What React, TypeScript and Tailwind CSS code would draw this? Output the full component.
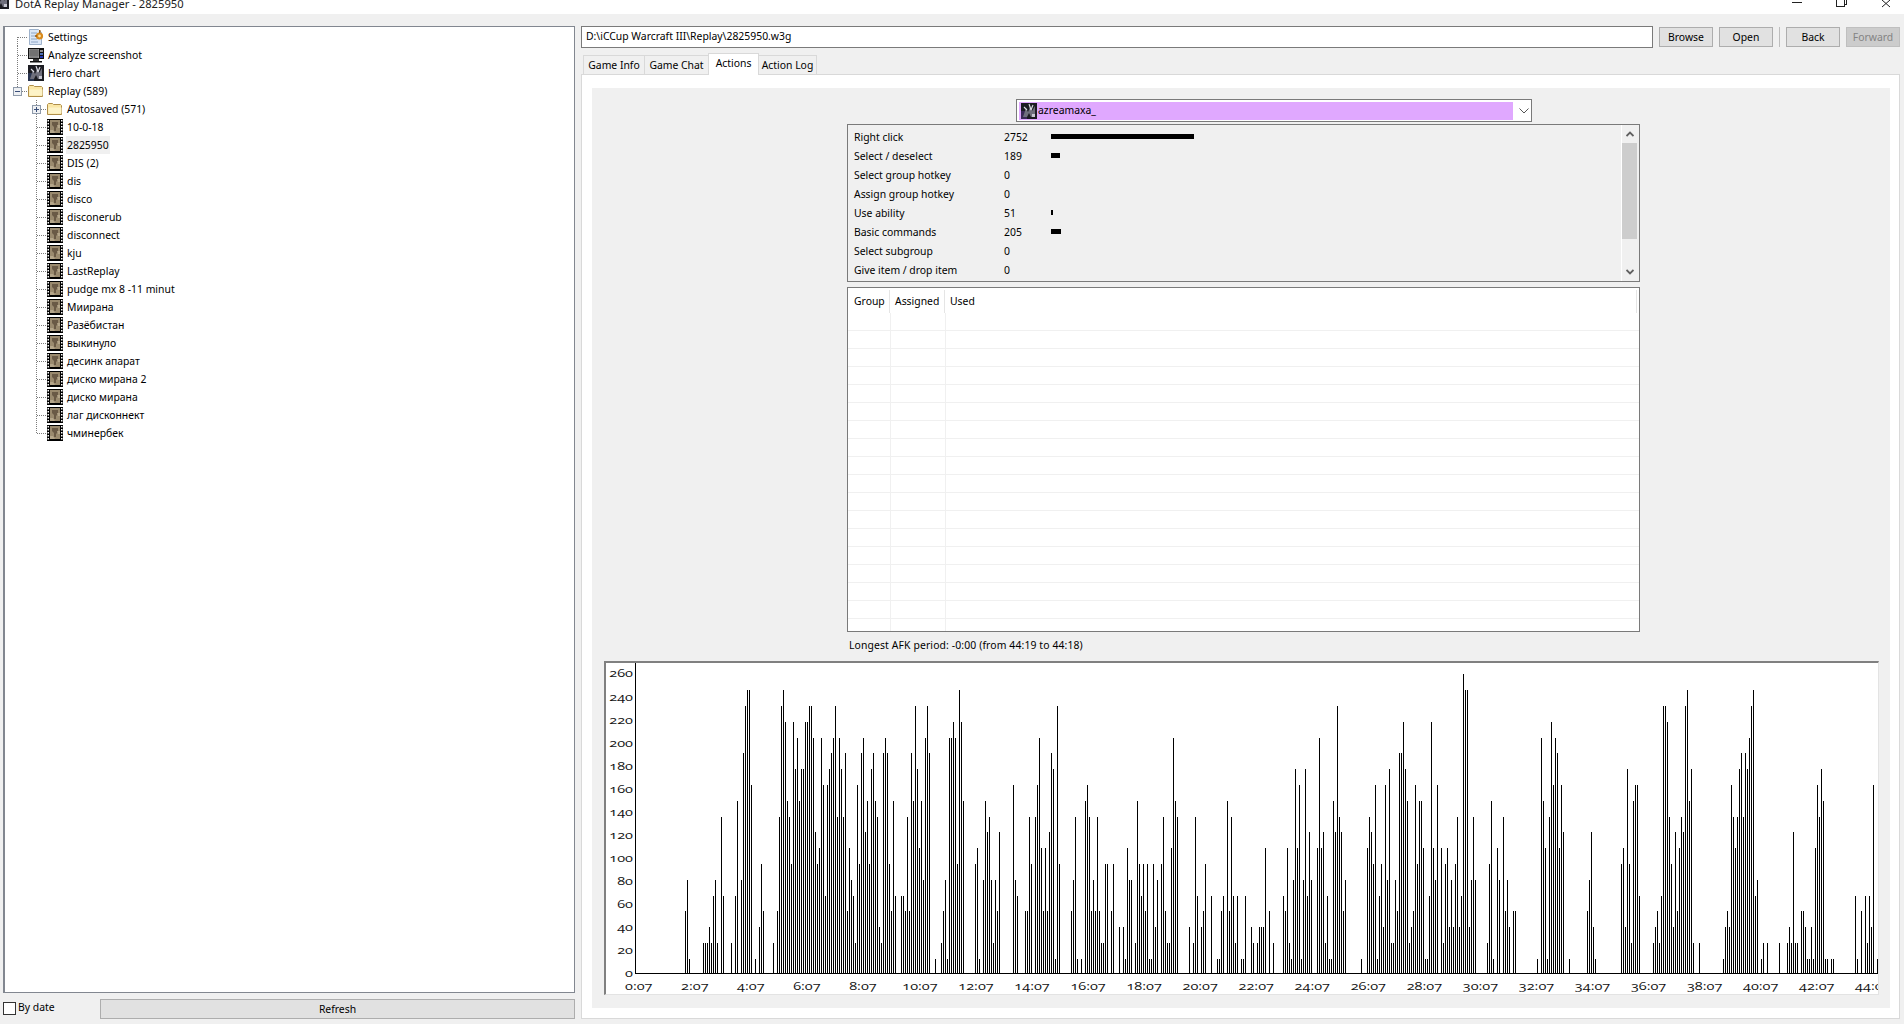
const replays = [
  "10-0-18",
  "2825950",
  "DIS (2)",
  "dis",
  "disco",
  "disconerub",
  "disconnect",
  "kju",
  "LastReplay",
  "pudge mx 8 -11 minut",
  "Миирана",
  "Разёбистан",
  "выкинуло",
  "десинк апарат",
  "диско мирана 2",
  "диско мирана",
  "лаг дисконнект",
  "чминербек",
];

const actions: [string, string, number][] = [
  ["Right click", "2752", 143],
  ["Select / deselect", "189", 9],
  ["Select group hotkey", "0", 0],
  ["Assign group hotkey", "0", 0],
  ["Use ability", "51", 2],
  ["Basic commands", "205", 10],
  ["Select subgroup", "0", 0],
  ["Give item / drop item", "0", 0],
];

// bars of the chart: [first slot, one base-36 level per slot]
const barRuns: [number, string][] = [
  [24, "461"],
  [33, "222325620a5"],
  [47, "205b"],
  [52, "6ehiic"],
  [59, "1"],
  [61, "374"],
  [68, "2"],
  [70, "4ahigba7gdfbddgghhf978fc5cdefhafdae48652c7ef9b7deba32efe74b5"],
  [132, "554a4ebhd8b6fhe"],
  [149, "1"],
  [152, "2461ffgf7igb"],
  [169, "781"],
  [173, "6b9a62649"],
  [188, "c65"],
  [194, "44a7"],
  [199, "acf84849ed1h7"],
  [217, "46a1"],
  [222, "1"],
  [224, "bca464a4"],
  [232, "2277"],
  [237, "47"],
  [241, "3031866"],
  [249, "2b757471173607a4228fba"],
  [276, "302a50347"],
  [287, "5"],
  [290, "11450b4a525"],
  [302, "115"],
  [307, "32023338"],
  [316, "4"],
  [318, "2"],
  [323, "548216d8c16d596"],
  [340, "8f892511b9ha946"],
  [362, "1"],
  [365, "8a97c1573c6d2264eegdb234c7bb8115g86c"],
  [402, "82783637a35jii36a6"],
  [425, "27b10860a463044"],
  [450, "1"],
  [452, "fb81agcfe8c9"],
  [466, "1"],
  [475, "46931"],
  [492, "783d72bcc5"],
  [508, "23425hhga73948a9hibd2"],
  [531, "2"],
  [543, "1343ca8adeaedfhi56"],
  [562, "12"],
  [565, "2"],
  [571, "2"],
  [575, "232922"],
  [582, "44311318cadb11"],
  [597, "11"],
  [609, "51"],
  [612, "4"],
  [614, "5253c"],
  [620, "1"],
];

const levelTops = [974, 960, 944, 928, 912, 897, 881, 865, 849, 833, 818, 802, 786, 770, 754, 739, 723, 707, 691, 675];

const barPath = barRuns
  .flatMap(([start, levels]) =>
    levels.split("").map((c, i) => {
      const level = parseInt(c, 36);
      if (!level) return "";
      return `M${637.5 + 2 * (start + i)} 974V${levelTops[level]}`;
    }),
  )
  .join("");

const FilmIcon = () => (
  <svg width="16" height="16" viewBox="0 0 16 16" className="shrink-0">
    <rect width="16" height="16" fill="#000" />
    {[1, 4, 7, 10, 13].map((y) => (
      <g key={y}>
        <rect x="0.5" y={y} width="1.5" height="1.5" fill="#fff" />
        <rect x="14" y={y} width="1.5" height="1.5" fill="#fff" />
      </g>
    ))}
    <rect x="3" y="1" width="10" height="13" fill="#9a8a6e" />
    <path d="M5 3h6v4l-2 2v3H7V8L5 6z" fill="#6a5a46" />
    <path d="M3 11h3l2 3H3zM10 6h3v3h-2z" fill="#b5a68a" />
  </svg>
);

const FolderIcon = () => (
  <svg width="16" height="16" viewBox="0 0 16 16" className="shrink-0">
    <path d="M.5 13.5v-10l1-1h4l1 1h7l1 1v9z" fill="#fbe7a6" stroke="#b08f4a" />
    <path d="M1.5 6.5h13v6h-13z" fill="#fdf3c8" />
  </svg>
);

const SettingsIcon = () => (
  <svg width="16" height="16" viewBox="0 0 16 16" className="shrink-0">
    <path d="M1.5.5h9l3 3v12h-12z" fill="#dbe7f7" stroke="#9fb3cc" />
    <path d="M3 4h6M3 7h5M3 10h6M3 13h7" stroke="#8ea6c6" />
    <circle cx="11.5" cy="7" r="3.6" fill="#d98a1e" />
    <circle cx="11.5" cy="7" r="1.4" fill="#fbe3a8" />
    <path d="M11 1h1.5v3H11zM7 6.2h2v1.5H7z" fill="#9c5b10" />
  </svg>
);

const ScreenshotIcon = () => (
  <svg width="16" height="16" viewBox="0 0 16 16" className="shrink-0">
    <rect y="1" width="16" height="11" fill="#111" />
    <rect x="1" y="2" width="10" height="9" fill="#9a9a9a" />
    <path d="M1 4h10M1 6h10M1 8h10M3 2v9M5 2v9M7 2v9M9 2v9" stroke="#555" strokeWidth="0.7" />
    <rect x="12" y="3" width="3" height="2" fill="#8f8f8f" />
    <rect x="12" y="6" width="3" height="2" fill="#4d6fb5" />
    <rect x="12" y="9" width="3" height="2" fill="#2438b0" />
    <rect x="5" y="12" width="6" height="2" fill="#333" />
    <rect x="2" y="14" width="12" height="1.5" fill="#111" />
  </svg>
);

const HeroIcon = ({ tint = "#2a3550" }: { tint?: string }) => (
  <svg width="16" height="16" viewBox="0 0 16 16" className="shrink-0">
    <rect width="16" height="16" fill="#1c1c22" />
    <rect x="0" y="8" width="6" height="8" fill={tint} />
    <path d="M2 14l3-9 2 4 3-7 1 6 3-5v11h-4l-2-4-2 4z" fill="#6f6f7c" />
    <path d="M8 1l2 6M12 2l-2 5M3 4l3 3" stroke="#dcdce4" strokeWidth="1.1" />
    <path d="M11 11h3v3h-3z" fill="#c8c8d2" />
  </svg>
);

const Expander = ({ open }: { open: boolean }) => (
  <>
    <rect x="0.5" y="0.5" width="8" height="8" fill="#eef0f3" stroke="#8f9bab" />
    <path d={open ? "M2 4.5h5" : "M2 4.5h5M4.5 2v5"} stroke="#3a4f7a" />
  </>
);

// dotted tree lines in front of a row's icon
const Guide = ({ level, top, bottom, expander }: { level: 0 | 1; top: boolean; bottom: boolean; expander?: "open" | "closed" }) => {
  const x = level === 0 ? 12.5 : 31.5;
  const end = level === 0 ? 23 : 42;
  return (
    <svg width={end} height="18" className="shrink-0" shapeRendering="crispEdges">
      <path
        d={`M${x} ${top ? 0 : 9}V${bottom ? 18 : 9}M${x} 9.5H${end}`}
        stroke="#7c7c7c"
        strokeDasharray="1 1"
        fill="none"
      />
      {expander && (
        <g transform={`translate(${x - 4.5} 5)`}>
          <Expander open={expander === "open"} />
        </g>
      )}
    </svg>
  );
};

const TreeRow = ({
  level,
  top = true,
  bottom = true,
  expander,
  icon,
  label,
  selected,
}: {
  level: 0 | 1;
  top?: boolean;
  bottom?: boolean;
  expander?: "open" | "closed";
  icon: React.ReactNode;
  label: string;
  selected?: boolean;
}) => (
  <div className="flex h-[18px] items-center">
    <Guide level={level} top={top} bottom={bottom} expander={expander} />
    {icon}
    <span className={`ml-[3px] flex h-[18px] items-center px-[1px] pt-[1px] whitespace-nowrap ${selected ? "bg-[#f0f0f0]" : ""}`}>{label}</span>
  </div>
);

const Button = ({ label, disabled }: { label: string; disabled?: boolean }) => (
  <div
    className={`flex h-[20px] w-[54px] items-center justify-center border pt-[1px] ${
      disabled ? "border-[#bfbfbf] bg-[#cccccc] text-[#838383]" : "border-[#adadad] bg-[#e1e1e1] text-black"
    }`}
  >
    {label}
  </div>
);

const Tab = ({ label, className }: { label: string; className: string }) => (
  <div className={`flex h-[19px] items-center justify-center border border-b-0 border-[#d9d9d9] bg-[#f0f0f0] pt-[1px] ${className}`}>{label}</div>
);

const ScrollArrow = ({ up }: { up?: boolean }) => (
  <div className="flex h-[18px] items-center justify-center">
    <svg width="8" height="6" viewBox="0 0 8 6">
      <path d={up ? "M0.5 5L4 1.5 7.5 5" : "M0.5 1L4 4.5 7.5 1"} fill="none" stroke="#606060" strokeWidth="1.8" />
    </svg>
  </div>
);

const Chart = () => (
  <div className="ml-[12px] mt-[8px] h-[334px] w-[1275px] border-t-2 border-l-2 border-r border-b border-t-[#808080] border-l-[#808080] border-r-[#e3e3e3] border-b-[#e3e3e3] bg-white">
    <svg width="1272" height="331" viewBox="606 664 1272 331" className="block">
      <path d={barPath} stroke="#000" fill="none" shapeRendering="crispEdges" />
      <path d="M635.5 664V974.5H1878" stroke="#000" fill="none" shapeRendering="crispEdges" />
      {Array.from({ length: 14 }, (_, i) => (
        <text
          key={i}
          transform={`translate(633 ${978 - i * 23.04}) scale(1.45 1)`}
          textAnchor="end"
          className="fill-[#111] font-['Open_Sans'] text-[10px] oldstyle-nums"
        >
          {i * 20}
        </text>
      ))}
      {Array.from({ length: 23 }, (_, i) => (
        <text
          key={i}
          transform={`translate(${(i >= 5 ? 622 : 625) + i * 56.05} 990.5) scale(1.45 1)`}
          className="fill-[#111] font-['Open_Sans'] text-[10px] oldstyle-nums"
        >
          {`${i * 2}:07`}
        </text>
      ))}
    </svg>
  </div>
);

export default function App() {
  return (
    <div className="flex h-[1024px] w-[1904px] flex-col overflow-hidden bg-[#f0f0f0] font-['Noto_Sans'] text-[10.4px] text-black">
      {/* title bar, cut off at the top of the shot */}
      <div className="flex h-[14px] shrink-0 items-start overflow-hidden bg-white">
        <div className="-mt-[7px] shrink-0">
          <div className="-ml-[7px]">
            <HeroIcon tint="#4a3a20" />
          </div>
        </div>
        <span className="ml-[6px] -mt-[5px] text-[11.2px] leading-[18px] text-[#222]">DotA Replay Manager - 2825950</span>
        <svg width="120" height="14" className="ml-auto mr-[8px] shrink-0" viewBox="1776 0 120 14" shapeRendering="crispEdges">
          <path d="M1792 2.5H1802" stroke="#222" />
          <path d="M1836.5 0V6.5H1844.5V0M1846.5 0V4.5H1844.5" stroke="#222" fill="none" />
          <path d="M1882 0L1890 7M1890 0L1882 7" stroke="#222" fill="none" shapeRendering="auto" />
        </svg>
      </div>

      <div className="flex min-h-0 flex-1 gap-[6px] pl-[3px] pt-[12px]">
        {/* left: replay tree */}
        <div className="flex w-[572px] shrink-0 flex-col">
          <div className="h-[967px] overflow-hidden border border-[#828790] border-l-2 bg-white pt-[1px]">
            <TreeRow level={0} top={false} icon={<SettingsIcon />} label="Settings" />
            <TreeRow level={0} icon={<ScreenshotIcon />} label="Analyze screenshot" />
            <TreeRow level={0} icon={<HeroIcon />} label="Hero chart" />
            <TreeRow level={0} bottom={false} expander="open" icon={<FolderIcon />} label="Replay (589)" />
            <TreeRow level={1} expander="closed" icon={<FolderIcon />} label="Autosaved (571)" />
            {replays.map((name, i) => (
              <TreeRow
                key={name}
                level={1}
                bottom={i < replays.length - 1}
                icon={<FilmIcon />}
                label={name}
                selected={name === "2825950"}
              />
            ))}
          </div>
          <div className="mt-[6px] flex h-[20px] items-center">
            <div className="-mt-[2px] h-[13px] w-[13px] shrink-0 border border-[#333] bg-white" />
            <span className="ml-[2px] -mt-[2px]">By date</span>
            <div className="ml-auto flex h-[20px] w-[475px] items-center justify-center border border-[#adadad] bg-[#e1e1e1] pt-[1px]">Refresh</div>
          </div>
        </div>

        {/* right: replay details */}
        <div className="flex w-[1319px] shrink-0 flex-col">
          <div className="flex h-[22px] items-center">
            <div className="flex h-[22px] w-[1073px] items-center border border-[#7a7a7a] bg-white pb-[1px] pl-[4px]">D:\iCCup Warcraft III\Replay\2825950.w3g</div>
            <div className="ml-[6px] flex items-center gap-[6px]">
              <Button label="Browse" />
              <Button label="Open" />
              <div className="h-[20px] w-[1px] bg-[#bdbdbd]" />
              <Button label="Back" />
              <Button label="Forward" disabled />
            </div>
          </div>

          <div className="mt-[6px] flex h-[20px] items-end pl-[2px]">
            <Tab label="Game Info" className="w-[62px]" />
            <Tab label="Game Chat" className="-ml-[1px] w-[65px]" />
            <div className="-ml-[1px] -mb-[1px] relative z-10 flex h-[22px] w-[51px] items-start justify-center border border-b-0 border-[#d9d9d9] bg-white pt-[2px]">Actions</div>
            <Tab label="Action Log" className="-ml-[1px] w-[59px]" />
          </div>

          <div className="h-[945px] border border-[#d9d9d9] bg-white pl-[10px] pt-[13px]">
            <div className="flex h-[920px] w-[1298px] flex-col bg-[#f0f0f0] pt-[11px]">
              {/* player combo */}
              <div className="ml-[424px] flex h-[23px] w-[516px] shrink-0 items-center border border-[#7a7a7a] bg-white p-[2px]">
                <div className="flex h-[18px] w-[494px] items-center bg-[#e0a8ff] pl-[2px]">
                  <HeroIcon tint="#3a2a55" />
                  <span className="ml-[1px]">azreamaxa_</span>
                </div>
                <svg width="10" height="6" viewBox="0 0 10 6" className="ml-[6px]">
                  <path d="M.5.5L5 5 9.5.5" fill="none" stroke="#555" />
                </svg>
              </div>

              {/* action list */}
              <div className="ml-[255px] mt-[2px] flex h-[158px] w-[793px] shrink-0 border border-[#7a7a7a]">
                <div className="flex-1 pl-[6px] pt-[3px]">
                  {actions.map(([label, count, width]) => (
                    <div key={label} className="flex h-[19px] items-center">
                      <span className="w-[150px]">{label}</span>
                      <span className="w-[47px]">{count}</span>
                      <div className="-mt-[3px] h-[5px] bg-black" style={{ width }} />
                    </div>
                  ))}
                </div>
                <div className="mr-[2px] flex w-[16px] flex-col border-l border-white">
                  <ScrollArrow up />
                  <div className="h-[96px] bg-[#cdcdcd]" />
                  <div className="flex-1" />
                  <ScrollArrow />
                </div>
              </div>

              {/* hotkey table */}
              <div className="ml-[255px] mt-[5px] h-[345px] w-[793px] shrink-0 overflow-hidden border border-[#7a7a7a] bg-white">
                <div className="flex h-[25px] pt-[2px]">
                  <div className="flex w-[42px] items-center border-r border-[#e5e5e5] pl-[6px]">Group</div>
                  <div className="flex w-[55px] items-center border-r border-[#e5e5e5] pl-[5px]">Assigned</div>
                  <div className="mr-[2px] flex flex-1 items-center border-r border-[#e5e5e5] pl-[5px]">Used</div>
                </div>
                {Array.from({ length: 18 }, (_, i) => (
                  <div key={i} className="flex h-[18px] border-b border-[#f0f0f0]">
                    <div className="w-[43px] border-r border-[#f0f0f0]" />
                    <div className="w-[55px] border-r border-[#f0f0f0]" />
                    <div className="flex-1" />
                  </div>
                ))}
              </div>

              <div className="ml-[257px] mt-[5px] h-[16px] leading-[16px] tracking-[0.12px]">Longest AFK period: -0:00 (from 44:19 to 44:18)</div>

              <Chart />
            </div>
          </div>
        </div>
      </div>
    </div>
  );
}
